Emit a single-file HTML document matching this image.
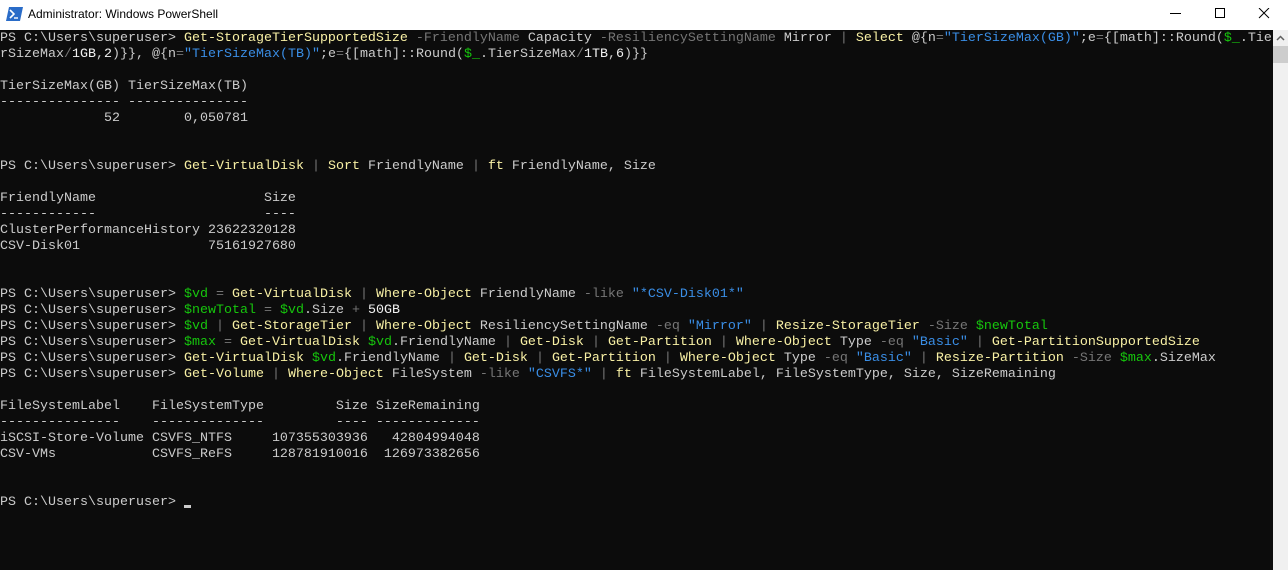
<!DOCTYPE html>
<html><head><meta charset="utf-8"><style>
html,body{margin:0;padding:0;width:1288px;height:570px;overflow:hidden;background:#0c0c0c}
#tb{position:absolute;left:0;top:0;width:1288px;height:30px;background:#fff}
#tb .t{position:absolute;left:28px;top:7px;font:12px "Liberation Sans",sans-serif;color:#000}
#term{position:absolute;left:0;top:30px;width:1273px;height:540px;background:#0c0c0c}
pre{margin:0;margin-top:1px;font-family:"Liberation Mono",monospace;font-size:13.33px;line-height:16px;color:#cccccc;white-space:pre}
.c{color:#f9f1a5}.p{color:#767676}.v{color:#16c60c}.s{color:#3a8ee6}.n{color:#f2f2f2}
#sb{position:absolute;left:1273px;top:30px;width:15px;height:540px;background:#f0f0f0}
#th{position:absolute;left:1273px;top:46px;width:15px;height:17px;background:#cdcdcd}
#cur{position:absolute;left:184px;top:505px;width:7px;height:3px;background:#ccc}
</style></head><body>
<div id="tb">
<svg style="position:absolute;left:6px;top:7px" width="17" height="14" viewBox="0 0 17 14"><polygon points="3,0 17,0 14,14 0,14" fill="#2a6cc8"/><polyline points="4,3 8,7 4,11" fill="none" stroke="#fff" stroke-width="1.6"/><line x1="8" y1="11" x2="12" y2="11" stroke="#fff" stroke-width="1.4"/></svg>
<div class="t">Administrator: Windows PowerShell</div>
<svg style="position:absolute;left:1170px;top:8px" width="110" height="14"><line x1="0" y1="5.5" x2="11" y2="5.5" stroke="#000"/><rect x="45.5" y="0.5" width="9" height="9" fill="none" stroke="#000"/><path d="M89 0 L99 10 M99 0 L89 10" stroke="#000"/></svg>
</div>
<div id="term"><pre>PS C:\Users\superuser&gt; <span class="c">Get-StorageTierSupportedSize</span> <span class="p">-FriendlyName</span> Capacity <span class="p">-ResiliencySettingName</span> Mirror <span class="p">|</span> <span class="c">Select</span> @{n<span class="p">=</span><span class="s">"TierSizeMax(GB)"</span>;e<span class="p">=</span>{[math]::Round(<span class="v">$_</span>.Tie
rSizeMax<span class="p">/</span><span class="n">1GB</span>,<span class="n">2</span>)}}, @{n<span class="p">=</span><span class="s">"TierSizeMax(TB)"</span>;e<span class="p">=</span>{[math]::Round(<span class="v">$_</span>.TierSizeMax<span class="p">/</span><span class="n">1TB</span>,<span class="n">6</span>)}}

TierSizeMax(GB) TierSizeMax(TB)
--------------- ---------------
             52        0,050781


PS C:\Users\superuser&gt; <span class="c">Get-VirtualDisk</span> <span class="p">|</span> <span class="c">Sort</span> FriendlyName <span class="p">|</span> <span class="c">ft</span> FriendlyName, Size

FriendlyName                     Size
------------                     ----
ClusterPerformanceHistory 23622320128
CSV-Disk01                75161927680


PS C:\Users\superuser&gt; <span class="v">$vd</span> <span class="p">=</span> <span class="c">Get-VirtualDisk</span> <span class="p">|</span> <span class="c">Where-Object</span> FriendlyName <span class="p">-like</span> <span class="s">"*CSV-Disk01*"</span>
PS C:\Users\superuser&gt; <span class="v">$newTotal</span> <span class="p">=</span> <span class="v">$vd</span>.Size <span class="p">+</span> <span class="n">50GB</span>
PS C:\Users\superuser&gt; <span class="v">$vd</span> <span class="p">|</span> <span class="c">Get-StorageTier</span> <span class="p">|</span> <span class="c">Where-Object</span> ResiliencySettingName <span class="p">-eq</span> <span class="s">"Mirror"</span> <span class="p">|</span> <span class="c">Resize-StorageTier</span> <span class="p">-Size</span> <span class="v">$newTotal</span>
PS C:\Users\superuser&gt; <span class="v">$max</span> <span class="p">=</span> <span class="c">Get-VirtualDisk</span> <span class="v">$vd</span>.FriendlyName <span class="p">|</span> <span class="c">Get-Disk</span> <span class="p">|</span> <span class="c">Get-Partition</span> <span class="p">|</span> <span class="c">Where-Object</span> Type <span class="p">-eq</span> <span class="s">"Basic"</span> <span class="p">|</span> <span class="c">Get-PartitionSupportedSize</span>
PS C:\Users\superuser&gt; <span class="c">Get-VirtualDisk</span> <span class="v">$vd</span>.FriendlyName <span class="p">|</span> <span class="c">Get-Disk</span> <span class="p">|</span> <span class="c">Get-Partition</span> <span class="p">|</span> <span class="c">Where-Object</span> Type <span class="p">-eq</span> <span class="s">"Basic"</span> <span class="p">|</span> <span class="c">Resize-Partition</span> <span class="p">-Size</span> <span class="v">$max</span>.SizeMax
PS C:\Users\superuser&gt; <span class="c">Get-Volume</span> <span class="p">|</span> <span class="c">Where-Object</span> FileSystem <span class="p">-like</span> <span class="s">"CSVFS*"</span> <span class="p">|</span> <span class="c">ft</span> FileSystemLabel, FileSystemType, Size, SizeRemaining

FileSystemLabel    FileSystemType         Size SizeRemaining
---------------    --------------         ---- -------------
iSCSI-Store-Volume CSVFS_NTFS     107355303936   42804994048
CSV-VMs            CSVFS_ReFS     128781910016  126973382656


PS C:\Users\superuser&gt; </pre></div>
<div id="cur"></div>
<div id="sb"></div>
<svg style="position:absolute;left:1276px;top:35px" width="9" height="6"><polyline points="1,5 4.5,1.5 8,5" fill="none" stroke="#606060" stroke-width="1.5"/></svg>
<div id="th"></div>
</body></html>
